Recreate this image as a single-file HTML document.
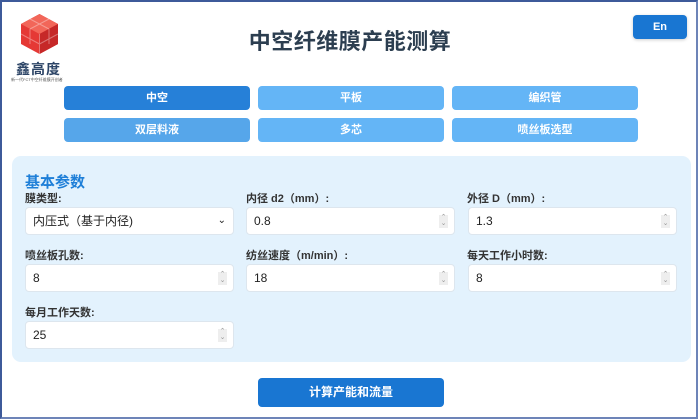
<!DOCTYPE html>
<html><head><meta charset="utf-8"><style>
*{box-sizing:border-box;margin:0;padding:0}
body{width:700px;height:420px;background:#fff;font-family:"Liberation Sans","Noto Sans CJK SC",sans-serif;position:relative;overflow:hidden}
.frame{position:absolute;left:0;top:0;width:698px;height:419px;border:2px solid #6d84b8;border-top-color:#3d5a9a;border-left-color:#3d5a9a}
.abs{position:absolute}
.title{left:0;width:700px;top:24px;text-align:center;font-size:22px;font-weight:bold;color:#2c3e50;letter-spacing:0.5px}
.en{left:633px;top:15px;width:54px;height:24px;background:#1976d2;border-radius:4px;color:#fff;font-size:11px;font-weight:bold;text-align:center;line-height:24px;box-shadow:0 1px 3px rgba(0,0,0,.2)}
.tab{height:24px;border-radius:4px;color:#fff;font-size:11px;font-weight:bold;text-align:center;line-height:24px;background:#64b5f6}
.panel{left:12px;top:156px;width:679px;height:206px;background:#e3f2fd;border-radius:9px}
.h{left:25px;top:171px;font-size:15px;font-weight:bold;color:#1e7fd8}
.lbl{font-size:11px;font-weight:bold;color:#333}
.inp{width:209px;height:28px;background:#fff;border:1px solid #dde6ee;border-radius:4px;font-size:12px;color:#222;padding-left:7px;line-height:26px}
.sp{position:absolute;right:6px;top:7px;width:9px;height:13px;background:#eee;font-size:7px;color:#999;line-height:6px;text-align:center}
.btn{left:258px;top:378px;width:186px;height:29px;background:#1976d2;border-radius:4px;color:#fff;font-size:12px;font-weight:bold;text-align:center;line-height:29px}
</style></head><body>
<div class="frame"></div>
<svg class="abs" style="left:21px;top:14px" width="37" height="40" viewBox="0 0 37 40">
<polygon points="18.5,0 37,10 37,30 18.5,40 0,30 0,10" fill="#e53935"/>
<polygon points="18.5,0 37,10 18.5,20 0,10" fill="#f26659"/>
<polygon points="18.5,20 37,10 37,30 18.5,40" fill="#c62828"/>
<path d="M9 5L28 15M28 5L9 15M9 15v15M28 15v15M18.5 20v20M0 20l18.5 10 18.5-10" stroke="#fff" stroke-opacity=".35" stroke-width="1" fill="none"/>
</svg>
<div class="abs" style="left:16px;top:59px;font-size:14px;font-weight:bold;color:#2c4466;letter-spacing:1px">鑫高度</div>
<div class="abs" style="left:11px;top:77px;font-size:4px;color:#555;white-space:nowrap">新一代FCT中空纤维膜开创者</div>
<div class="abs title">中空纤维膜产能测算</div>
<div class="abs en">En</div>
<div class="abs tab" style="left:64px;top:86px;width:186px;background:#2680d8">中空</div>
<div class="abs tab" style="left:258px;top:86px;width:186px">平板</div>
<div class="abs tab" style="left:452px;top:86px;width:186px">编织管</div>
<div class="abs tab" style="left:64px;top:118px;width:186px;background:#56a6ea">双层料液</div>
<div class="abs tab" style="left:258px;top:118px;width:186px">多芯</div>
<div class="abs tab" style="left:452px;top:118px;width:186px">喷丝板选型</div>
<div class="abs panel"></div>
<div class="abs h">基本参数</div>
<div class="abs lbl" style="left:25px;top:190px">膜类型:</div>
<div class="abs inp" style="left:25px;top:207px;padding-left:7px">内压式（基于内径)<span style="position:absolute;right:7px;top:0;font-size:10px">⌄</span></div>
<div class="abs lbl" style="left:246px;top:190px">内径 d2（mm）:</div>
<div class="abs inp" style="left:246px;top:207px">0.8<span class="sp">⌃<br>⌄</span></div>
<div class="abs lbl" style="left:467px;top:190px">外径 D（mm）:</div>
<div class="abs inp" style="left:468px;top:207px">1.3<span class="sp">⌃<br>⌄</span></div>
<div class="abs lbl" style="left:25px;top:247px">喷丝板孔数:</div>
<div class="abs inp" style="left:25px;top:264px">8<span class="sp">⌃<br>⌄</span></div>
<div class="abs lbl" style="left:246px;top:247px">纺丝速度（m/min）:</div>
<div class="abs inp" style="left:246px;top:264px">18<span class="sp">⌃<br>⌄</span></div>
<div class="abs lbl" style="left:467px;top:247px">每天工作小时数:</div>
<div class="abs inp" style="left:468px;top:264px">8<span class="sp">⌃<br>⌄</span></div>
<div class="abs lbl" style="left:25px;top:304px">每月工作天数:</div>
<div class="abs inp" style="left:25px;top:321px">25<span class="sp">⌃<br>⌄</span></div>
<div class="abs btn">计算产能和流量</div>
</body></html>
